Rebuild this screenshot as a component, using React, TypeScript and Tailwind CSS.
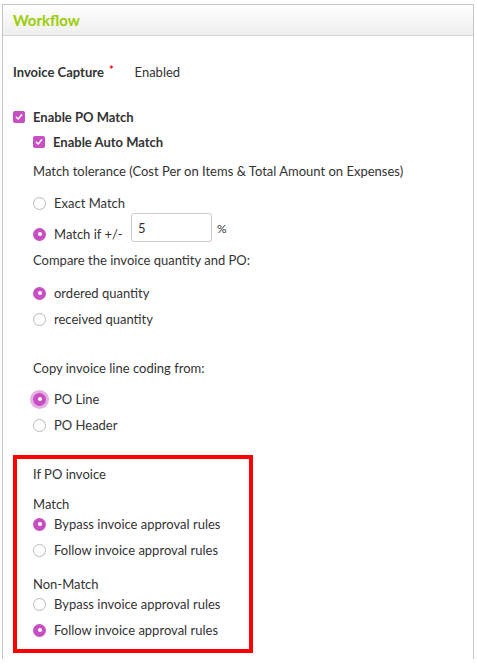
import React from "react";

function Radio({ checked, focus }: { checked?: boolean; focus?: boolean }) {
  if (checked) {
    return (
      <span
        className={`flex h-[13px] w-[13px] shrink-0 items-center justify-center rounded-full bg-[#c84fc1] ${
          focus ? "shadow-[0_0_0_3px_rgba(200,79,193,0.45)]" : ""
        }`}
      >
        <span className="h-[4px] w-[4px] rounded-full bg-white" />
      </span>
    );
  }
  return <span className="h-[13px] w-[13px] shrink-0 rounded-full border border-[#b9b9b9] bg-white" />;
}

function Check() {
  return (
    <span className="flex h-[12px] w-[12px] shrink-0 items-center justify-center rounded-[2px] bg-[#c84fc1]">
      <svg width="8" height="8" viewBox="0 0 8 8">
        <path d="M1.3 4.2 L3.2 6 L6.7 1.8" fill="none" stroke="white" strokeWidth="1.4" strokeLinecap="round" strokeLinejoin="round" />
      </svg>
    </span>
  );
}

function RadioRow({ label, checked, focus, className = "" }: { label: string; checked?: boolean; focus?: boolean; className?: string }) {
  return (
    <div className={`flex h-[20px] items-center gap-[8px] ${className}`}>
      <Radio checked={checked} focus={focus} />
      <span>{label}</span>
    </div>
  );
}

export default function App() {
  return (
    <div className="min-h-[667px] bg-white text-[13px] leading-[20px] text-[#333333]" style={{ fontFamily: "Lato, 'Open Sans', sans-serif" }}>
      <div className="ml-[2px] mt-[4px] h-[655px] w-[472px] border-x border-t border-[#c6c6c6]">
        <div className="flex h-[31px] items-center border-b border-[#d6d6d6] bg-gradient-to-b from-white to-[#eeeeee] pl-[10px]">
          <span className="text-[15px] font-bold text-[#9acd00]">Workflow</span>
        </div>
        <div className="pl-[10px]">
          <div className="mt-[26px] flex h-[20px] items-center">
            <span className="font-bold">Invoice Capture</span>
            <span className="ml-[5px] mt-[1px] self-start text-[11px] font-bold leading-[14px] text-[#e8001c]">*</span>
            <span className="ml-[21px]">Enabled</span>
          </div>
          <div className="mt-[25px] flex h-[20px] items-center gap-[8px]">
            <Check />
            <span className="font-bold">Enable PO Match</span>
          </div>
          <div className="pl-[20px]">
            <div className="mt-[5px] flex h-[20px] items-center gap-[8px]">
              <Check />
              <span className="font-bold">Enable Auto Match</span>
            </div>
            <div className="mt-[9px] h-[20px]">Match tolerance (Cost Per on Items &amp; Total Amount on Expenses)</div>
            <RadioRow className="mt-[12px] h-[19px]" label="Exact Match" />
            <div className="flex h-[29px] items-start">
              <div className="mt-[11px] flex h-[20px] w-[98px] items-center gap-[8px]">
                <Radio checked />
                <span>Match if +/-</span>
              </div>
              <div className="flex h-[29px] w-[81px] items-center rounded-[3px] border border-[#cccccc] pl-[6px]">5</div>
              <span className="ml-[5px] mt-[6px] text-[12px]">%</span>
            </div>
            <div className="mt-[8px] h-[20px]">Compare the invoice quantity and PO:</div>
            <RadioRow className="mt-[13px]" label="ordered quantity" checked />
            <RadioRow className="mt-[6px]" label="received quantity" />
            <div className="mt-[29px] h-[20px]">Copy invoice line coding from:</div>
            <RadioRow className="mt-[11px]" label="PO Line" checked focus />
            <RadioRow className="mt-[6px]" label="PO Header" />
          </div>
          <div className="mt-[20px] w-[240px] border-[4px] border-[#ff0000] pb-[9px] pl-[16px] pt-[5px]">
            <div className="h-[20px]">If PO invoice</div>
            <div className="mt-[10px] h-[20px]">Match</div>
            <RadioRow label="Bypass invoice approval rules" checked />
            <RadioRow className="mt-[6px]" label="Follow invoice approval rules" />
            <div className="mt-[14px] h-[20px]">Non-Match</div>
            <RadioRow label="Bypass invoice approval rules" />
            <RadioRow className="mt-[6px]" label="Follow invoice approval rules" checked />
          </div>
        </div>
      </div>
    </div>
  );
}
